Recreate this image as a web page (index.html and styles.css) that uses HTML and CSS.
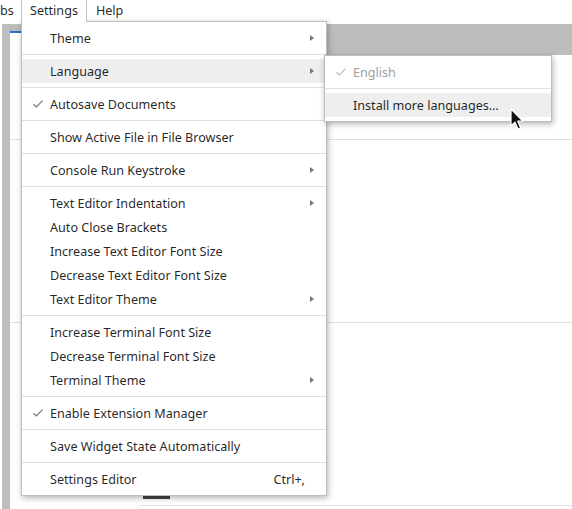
FILE: index.html
```html
<!DOCTYPE html>
<html lang="en">

<head>
    <meta charset="UTF-8">
    <meta name="viewport" content="width=device-width, initial-scale=1.0">
    <title>Settings Menu</title>
    <link rel="stylesheet" href="styles.css">
</head>

<body>
    <div class="shell">
        <div class="menubar">
            <div class="bar-item clipped">bs</div>
            <div class="bar-item active">Settings</div>
            <div class="bar-item">Help</div>
        </div>

        <div class="work">
            <div class="sidebar"></div>
            <div class="main">
                <div class="tabbar">
                    <div class="tab"></div>
                </div>
                <div class="panel panel-top"></div>
                <div class="panel panel-mid"></div>
                <div class="panel panel-bottom">
                    <div class="scroll-mark"></div>
                    <div class="foot-line"></div>
                </div>
            </div>
        </div>
    </div>

    <!-- main settings menu -->
    <ul class="menu settings-menu">
        <li class="item"><span class="icon"></span><span class="label">Theme</span><span class="arrow"></span></li>
        <li class="sep"></li>
        <li class="item hover"><span class="icon"></span><span class="label">Language</span><span class="arrow"></span></li>
        <li class="sep"></li>
        <li class="item"><span class="icon"><svg viewBox="0 0 10 8" width="10" height="8"><polyline points="0.5,4.2 3.4,7 9.5,0.6" fill="none" stroke="#757575" stroke-width="1.2"/></svg></span><span class="label">Autosave Documents</span></li>
        <li class="sep"></li>
        <li class="item"><span class="icon"></span><span class="label">Show Active File in File Browser</span></li>
        <li class="sep"></li>
        <li class="item"><span class="icon"></span><span class="label">Console Run Keystroke</span><span class="arrow"></span></li>
        <li class="sep"></li>
        <li class="item"><span class="icon"></span><span class="label">Text Editor Indentation</span><span class="arrow"></span></li>
        <li class="item"><span class="icon"></span><span class="label">Auto Close Brackets</span></li>
        <li class="item"><span class="icon"></span><span class="label">Increase Text Editor Font Size</span></li>
        <li class="item"><span class="icon"></span><span class="label">Decrease Text Editor Font Size</span></li>
        <li class="item"><span class="icon"></span><span class="label">Text Editor Theme</span><span class="arrow"></span></li>
        <li class="sep"></li>
        <li class="item"><span class="icon"></span><span class="label">Increase Terminal Font Size</span></li>
        <li class="item"><span class="icon"></span><span class="label">Decrease Terminal Font Size</span></li>
        <li class="item"><span class="icon"></span><span class="label">Terminal Theme</span><span class="arrow"></span></li>
        <li class="sep"></li>
        <li class="item"><span class="icon"><svg viewBox="0 0 10 8" width="10" height="8"><polyline points="0.5,4.2 3.4,7 9.5,0.6" fill="none" stroke="#757575" stroke-width="1.2"/></svg></span><span class="label">Enable Extension Manager</span></li>
        <li class="sep"></li>
        <li class="item"><span class="icon"></span><span class="label">Save Widget State Automatically</span></li>
        <li class="sep"></li>
        <li class="item"><span class="icon"></span><span class="label">Settings Editor</span><span class="shortcut">Ctrl+,</span></li>
    </ul>

    <!-- language submenu -->
    <ul class="menu language-menu">
        <li class="item disabled"><span class="icon"><svg viewBox="0 0 10 8" width="10" height="8"><polyline points="0.5,4.2 3.4,7 9.5,0.6" fill="none" stroke="#bdbdbd" stroke-width="1.2"/></svg></span><span class="label">English</span></li>
        <li class="sep"></li>
        <li class="item hover"><span class="icon"></span><span class="label">Install more languages…</span></li>
    </ul>

    <svg class="cursor" width="14" height="24" viewBox="0 0 14 24">
        <path d="M1 1 L1 18 L5 14.2 L8 21 L10.6 19.8 L7.7 13.2 L12.8 13.2 Z" fill="#111" stroke="#fff" stroke-width="1.2" stroke-linejoin="round"/>
    </svg>
</body>

</html>
```

FILE: styles.css
```css
body {
    margin: 0;
    width: 572px;
    height: 509px;
    overflow: hidden;
    background: #ffffff;
    font-family: 'Noto Sans', 'Open Sans', sans-serif;
    font-size: 12.6px;
    color: rgba(0, 0, 0, 0.87);
}

.shell {
    display: flex;
    flex-direction: column;
    height: 509px;
}

.menubar {
    display: flex;
    height: 22px;
    background: #ffffff;
}

.bar-item {
    padding: 0 8px;
    line-height: 22px;
    border-left: 1px solid transparent;
    border-right: 1px solid transparent;
}

.bar-item.clipped {
    padding: 0 10px 0 0;
    border-left: none;
    width: 10px;
}

.bar-item.active {
    border-color: #bdbdbd;
    position: relative;
    z-index: 3;
    background: #ffffff;
}

.work {
    flex: 1;
    display: flex;
    padding-top: 2px;
}

.sidebar {
    width: 8px;
    margin-left: 2px;
    background: #bdbdbd;
}

.main {
    flex: 1;
    display: flex;
    flex-direction: column;
}

.tabbar {
    height: 31px;
    background: #bdbdbd;
    display: flex;
    align-items: flex-end;
}

.tab {
    width: 300px;
    height: 22px;
    background: #ffffff;
    border-top: 2px solid #1976d2;
}

.panel {
    border-bottom: 1px solid #e0e0e0;
}

.panel-top {
    height: 84px;
}

.panel-mid {
    height: 182px;
}

.panel-bottom {
    flex: 1;
    border-bottom: none;
    display: flex;
    flex-direction: column;
    justify-content: flex-end;
}

.scroll-mark {
    width: 27px;
    height: 3px;
    background: #424242;
    margin-left: 133px;
    margin-bottom: 6px;
}

.foot-line {
    height: 3px;
    margin-left: 130px;
    border-top: 1px solid #e0e0e0;
}

/* menus */

.menu {
    position: absolute;
    margin: 0;
    padding: 4px 0;
    list-style: none;
    background: #ffffff;
    border: 1px solid #bdbdbd;
    box-shadow: 1px 2px 6px rgba(0, 0, 0, 0.3);
    z-index: 2;
}

.settings-menu {
    left: 21px;
    top: 21px;
    width: 304px;
}

.language-menu {
    left: 324px;
    top: 55px;
    width: 226px;
}

.item {
    display: flex;
    align-items: center;
    height: 24px;
}

.item.hover {
    background: #eeeeee;
}

.item.disabled {
    color: #9e9e9e;
}

.icon {
    width: 28px;
    display: flex;
    justify-content: center;
    padding-left: 4px;
    box-sizing: border-box;
}

.label {
    flex: 1;
    white-space: nowrap;
}

.arrow {
    width: 0;
    height: 0;
    border-left: 4px solid #757575;
    border-top: 3px solid transparent;
    border-bottom: 3px solid transparent;
    margin-right: 12px;
}

.shortcut {
    margin-right: 21px;
}

.sep {
    height: 1px;
    background: #e0e0e0;
    margin: 4px 0;
}

.cursor {
    position: absolute;
    left: 510px;
    top: 108px;
    z-index: 5;
}
```
